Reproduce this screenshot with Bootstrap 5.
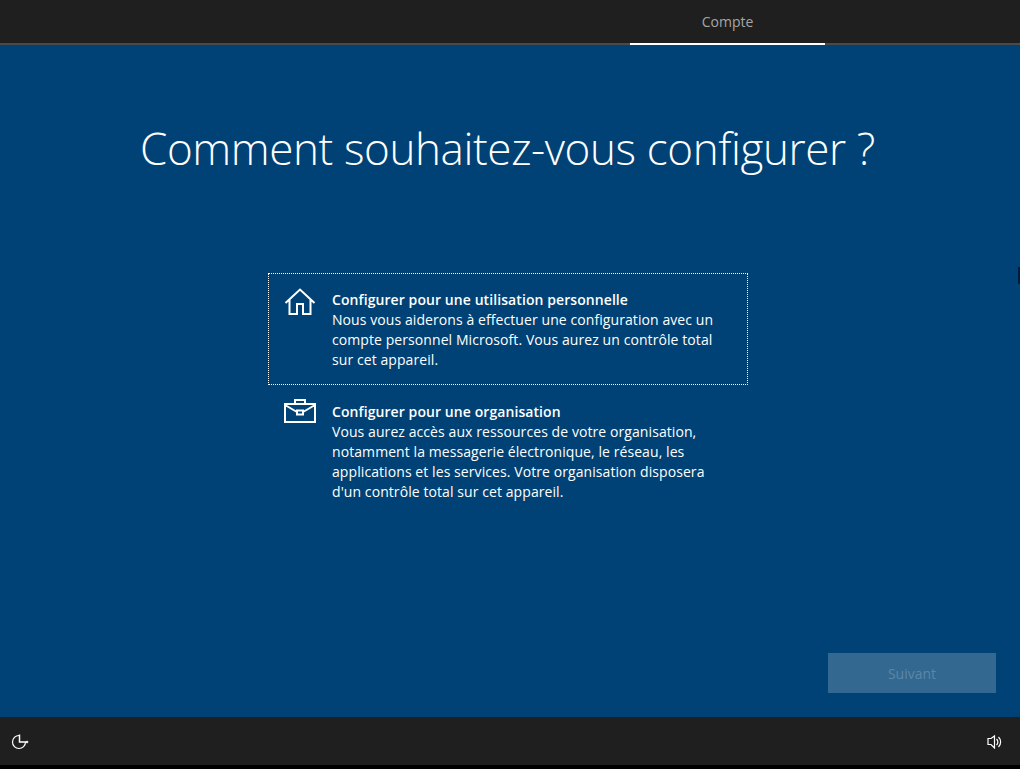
<!DOCTYPE html>
<html lang="fr">
<head>
    <meta charset="UTF-8">
    <title>Compte</title>
    <link href="https://cdn.jsdelivr.net/npm/bootstrap@5.3.0/dist/css/bootstrap.min.css" rel="stylesheet">
    <style>
        html, body { height: 100%; }
        body {
            background: #000;
            font-family: "Open Sans", "Noto Sans", sans-serif;
            overflow: hidden;
        }
        .oobe-page { height: 765px; }
        .oobe-top {
            height: 45px;
            background: #1f1f1f;
            border-bottom: 2px solid #4a4a4a;
            padding-left: 630px;
        }
        .oobe-tab {
            width: 195px;
            height: 45px;
            border-bottom: 2px solid #fff;
            color: #a6a6a6;
            font-size: 14px;
            padding-top: 11px;
        }
        .oobe-main { background: #004275; position: relative; }
        .oobe-title {
            margin: 0;
            padding: 69px 5px 0 0;
            color: #fff;
            font-size: 44px;
            font-weight: 300;
            letter-spacing: -.4px;
            line-height: 68px;
        }
        .oobe-options { width: 480px; margin-top: 91px; margin-left: 268px; }
        .oobe-option {
            color: #fff;
            font-size: 14px;
            letter-spacing: .08px;
            line-height: 20px;
            padding: 16px 15px 15px 15px;
            border: 1px dotted transparent;
            height: 112px;
        }
        .oobe-option.selected { border-color: #fff; }
        .oobe-option svg { flex: none; margin: -4px 16px 0 0; }
        .oobe-option strong { font-weight: 600; display: block; }
        .oobe-text { max-width: 390px; }
        .oobe-next {
            --bs-btn-disabled-bg: #336890;
            --bs-btn-disabled-color: #5c87a8;
            --bs-btn-disabled-opacity: 1;
            --bs-btn-disabled-border-color: #336890;
            width: 168px;
            height: 40px;
            font-size: 14px;
            border-radius: 0;
        }
        .oobe-bottom { height: 48px; background: #1f1f1f; padding: 0 18px 0 11px; }
        .oobe-notch {
            position: absolute;
            right: 0;
            top: 222px;
            width: 2px;
            height: 17px;
            background: #001c3d;
        }
    </style>
</head>
<body>
<div class="oobe-page d-flex flex-column">
    <div class="oobe-top">
        <div class="oobe-tab text-center">Compte</div>
    </div>

    <div class="oobe-main flex-grow-1 d-flex flex-column">
        <h1 class="oobe-title text-center">Comment souhaitez-vous configurer ?</h1>

        <div class="oobe-options">
            <div class="oobe-option selected d-flex">
                <svg width="32" height="30" viewBox="0 0 32 30" fill="none" stroke="#fff" stroke-width="2">
                    <path d="M1.500 17 16 3.500 30.500 17M5.500 13.500V28H13V18h6v10h7.500V13.500"/>
                </svg>
                <div class="oobe-text">
                    <strong>Configurer pour une utilisation personnelle</strong>
                    Nous vous aiderons à effectuer une configuration avec un compte personnel Microsoft. Vous aurez un contrôle total sur cet appareil.
                </div>
            </div>
            <div class="oobe-option d-flex">
                <svg width="32" height="26" viewBox="0 0 32 26" fill="none" stroke="#fff" stroke-width="2">
                    <path d="M1 6h30v18H1zM1 7l12 7M31 7l-12 7M11 6V2h10v4M13 12.500h6v4h-6z"/>
                </svg>
                <div class="oobe-text">
                    <strong>Configurer pour une organisation</strong>
                    Vous aurez accès aux ressources de votre organisation, notamment la messagerie électronique, le réseau, les applications et les services. Votre organisation disposera d'un contrôle total sur cet appareil.
                </div>
            </div>
        </div>

        <div class="d-flex justify-content-end mt-auto pe-4 pb-4">
            <button class="oobe-next btn" disabled>Suivant</button>
        </div>
        <div class="oobe-notch"></div>
    </div>

    <div class="oobe-bottom d-flex align-items-center justify-content-between">
        <svg width="18" height="18" viewBox="0 0 18 18" fill="none" stroke="#fff" stroke-width="1.200">
            <path d="M8 3.500A6.500 6.500 0 1 0 14.500 10"/>
            <path stroke-width="1.500" d="M8.500 2.500v7.500h8M15.500 9l1 1-1 1"/>
        </svg>
        <svg width="15" height="16" viewBox="0 0 15 16" fill="none" stroke="#fff" stroke-width="1.200">
            <path d="M1 5.500h3L7.500 3v12L4 11.500H1zM9.500 6a4 4 0 0 1 0 6M11.500 4a7 7 0 0 1 0 10"/>
        </svg>
    </div>
</div>
<script src="https://cdn.jsdelivr.net/npm/bootstrap@5.3.0/dist/js/bootstrap.bundle.min.js"></script>
</body>
</html>
